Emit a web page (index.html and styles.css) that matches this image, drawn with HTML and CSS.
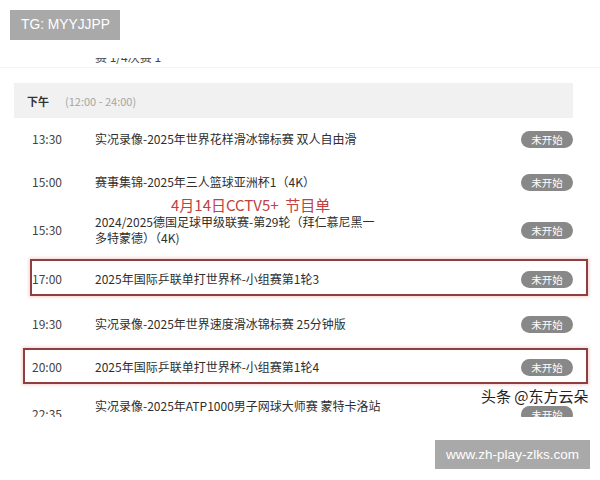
FILE: index.html
```html
<!DOCTYPE html>
<html lang="zh">
<head>
<meta charset="utf-8">
<link rel="stylesheet" href="styles.css">
</head>
<body>
<div class="page">
  <div class="tg">TG: MYYJJPP</div>
  <div class="schedule">
    <div class="prev"><span>赛 1/4决赛 1</span></div>
    <div class="period"><b>下午</b><span class="range">(12:00 - 24:00)</span></div>
    <div class="rows">
      <div class="row h42"><span class="time">13:30</span><span class="title">实况录像-2025年世界花样滑冰锦标赛 双人自由滑</span><span class="badge">未开始</span></div>
      <div class="row h44"><span class="time">15:00</span><span class="title">赛事集锦-2025年三人篮球亚洲杯1（4K）</span><span class="badge">未开始</span></div>
      <div class="row h52"><span class="time">15:30</span><span class="title">2024/2025德国足球甲级联赛-第29轮（拜仁慕尼黑一<br>多特蒙德）（4K)</span><span class="badge">未开始</span></div>
      <div class="row h46 mark mark-a"><span class="time">17:00</span><span class="title">2025年国际乒联单打世界杯-小组赛第1轮3</span><span class="badge">未开始</span></div>
      <div class="row h44"><span class="time">19:30</span><span class="title">实况录像-2025年世界速度滑冰锦标赛 25分钟版</span><span class="badge">未开始</span></div>
      <div class="row h42 mark mark-b"><span class="time">20:00</span><span class="title">2025年国际乒联单打世界杯-小组赛第1轮4</span><span class="badge">未开始</span></div>
      <div class="row h52 top"><span class="time">22:35</span><span class="title">实况录像-2025年ATP1000男子网球大师赛 蒙特卡洛站</span><span class="badge">未开始</span></div>
    </div>
    <div class="caption">4月14日CCTV5+&nbsp; 节目单</div>
  </div>
  <div class="source">头条 @东方云朵</div>
  <div class="site">www.zh-play-zlks.com</div>
</div>
</body>
</html>
```
FILE: styles.css
```css
html, body {
  margin: 0;
  padding: 0;
  background: #fff;
}
.page {
  position: relative;
  width: 600px;
  height: 480px;
  overflow: hidden;
  font-family: "Noto Sans CJK SC", "Noto Sans", sans-serif;
  color: #333;
}
.tg {
  position: absolute;
  left: 10px;
  top: 10px;
  width: 110px;
  height: 30px;
  background: #a9a9a9;
  color: #fff;
  font-family: "Liberation Sans", Arial, sans-serif;
  font-size: 13.8px;
  line-height: 30px;
  box-sizing: border-box;
  padding-left: 11px;
  white-space: nowrap;
  z-index: 3;
}
.schedule {
  position: relative;
  margin-top: 58px;
  height: 359px;
  overflow: hidden;
}
.prev {
  height: 9px;
  overflow: hidden;
  padding-left: 95px;
  border-bottom: 1px solid #f4f4f4;
  font-size: 12px;
  line-height: 16px;
  color: #444;
}
.prev span {
  display: block;
  margin-top: -9px;
}
.period {
  margin: 15px 27px 0 14px;
  height: 35px;
  background: #f1f1f1;
  display: flex;
  align-items: center;
  padding-left: 13px;
  gap: 16px;
  font-size: 11px;
}
.period b {
  color: #333;
  font-weight: 700;
}
.range {
  color: #a5a5a5;
}
.rows {
  display: flex;
  flex-direction: column;
}
.row {
  position: relative;
  display: grid;
  grid-template-columns: 63px 1fr 52px;
  align-items: center;
  padding: 0 27px 0 32px;
  font-size: 12px;
  line-height: 16px;
}
.h42 { height: 42px; }
.h44 { height: 44px; }
.h46 { height: 46px; }
.h52 { height: 52px; }
.time {
  color: #444;
}
.title {
  color: #2e2e2e;
  white-space: nowrap;
}
.row.top .title {
  align-self: start;
  padding-top: 10px;
}
.badge {
  height: 17px;
  border-radius: 9px;
  background: #888;
  color: #fff;
  font-size: 10.5px;
  line-height: 17px;
  text-align: center;
}
.mark::after {
  content: "";
  position: absolute;
  border: 2px solid #8f3f3f;
  box-shadow: 0 0 3px 1px rgba(220, 120, 120, 0.35);
  pointer-events: none;
}
.mark-a::after {
  left: 30px;
  right: 12px;
  top: 3px;
  bottom: 6px;
}
.mark-b::after {
  left: 23px;
  right: 12px;
  top: 2px;
  bottom: 4px;
}
.caption {
  position: absolute;
  left: 171px;
  top: 137px;
  font-size: 15px;
  line-height: 20px;
  color: #c0413f;
}
.source {
  position: absolute;
  left: 481px;
  top: 386px;
  font-size: 15px;
  line-height: 20px;
  color: #222;
  z-index: 3;
}
.site {
  position: absolute;
  left: 435px;
  top: 440px;
  width: 155px;
  height: 29px;
  background: #a9a9a9;
  color: #fff;
  font-family: "Liberation Sans", Arial, sans-serif;
  font-size: 13.5px;
  line-height: 29px;
  text-align: center;
}
```
